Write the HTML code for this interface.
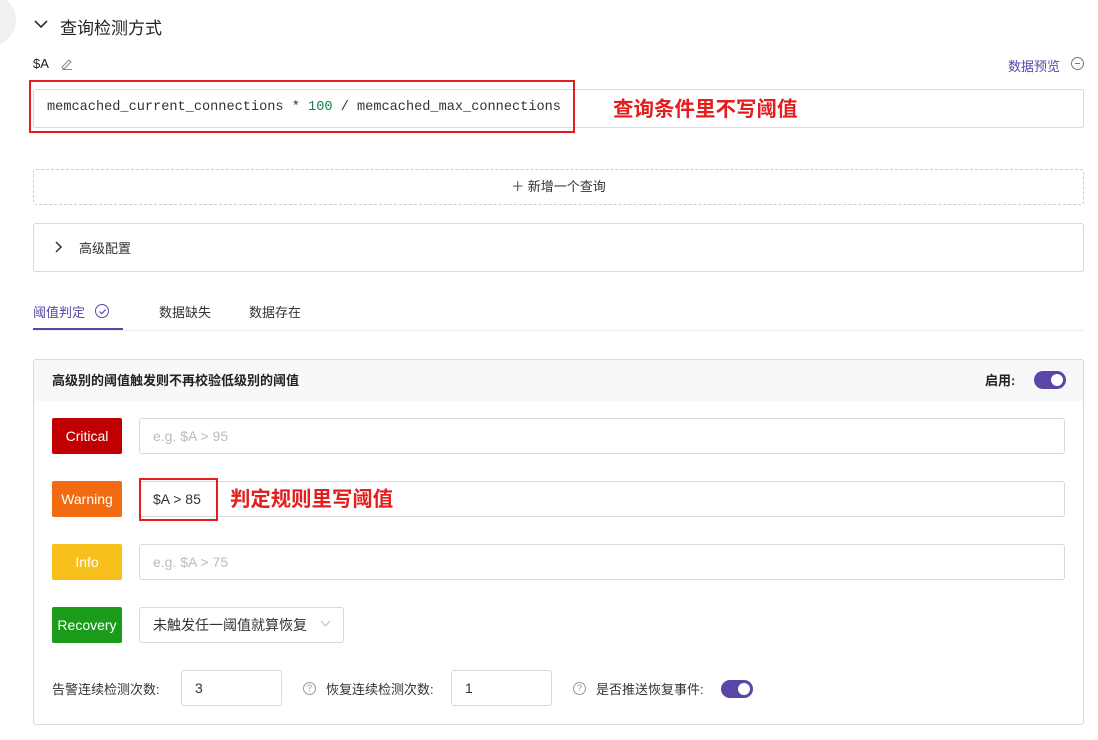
<!DOCTYPE html>
<html><head><meta charset="utf-8"><style>
*{box-sizing:border-box;margin:0;padding:0}
body{width:1098px;height:740px;background:#fff;font-family:"Liberation Sans","Noto Sans CJK SC",sans-serif;color:#333;position:relative;overflow:hidden;font-size:13px}
.a{position:absolute}
.box{position:absolute;border:1px solid #d9d9d9;border-radius:3px;background:#fff}
.lab{position:absolute;left:52px;width:70px;height:36px;color:#fff;font-size:14px;display:flex;align-items:center;justify-content:center;border-radius:2px}
.inp{position:absolute;left:139px;width:926px;height:36px;border:1px solid #d9d9d9;border-radius:3px;padding-left:13px;line-height:34px;font-size:14px;color:#bbb}
.sw{position:absolute;width:32px;height:18px;border-radius:9px;background:#5b46a8}
.sw:after{content:"";position:absolute;right:3px;top:3px;width:12px;height:12px;border-radius:50%;background:#fff}
.q{position:absolute;width:13px;height:13px;border:1px solid #999;border-radius:50%;font-size:9px;color:#999;text-align:center;line-height:11px}
</style></head><body>
<div class="a" style="left:-30px;top:-5px;width:46px;height:50px;border-radius:50%;background:#f0f0f0"></div>
<svg class="a" style="left:33px;top:17px" width="16" height="14"><path d="M2 4 L8 10 L14 4" stroke="#333" stroke-width="1.6" fill="none"/></svg>
<div class="a" style="left:60px;top:14px;font-size:17px;color:#222">查询检测方式</div>
<div class="a" style="left:33px;top:56px;font-size:13px;color:#222">$A</div>
<svg class="a" style="left:60px;top:57px" width="13" height="13"><path d="M2 10 L9 3 L11 5 L4 12 Z M2 12.5 H12" stroke="#888" stroke-width="1" fill="none"/></svg>
<div class="a" style="left:1008px;top:56px;color:#5b46a8">数据预览</div>
<div class="a" style="left:1071px;top:57px;width:13px;height:13px;border:1px solid #777;border-radius:50%"><div style="position:absolute;left:3px;top:5px;width:5px;height:1px;background:#777"></div></div>
<div class="box" style="left:33px;top:89px;width:1051px;height:39px"></div>
<div class="a" style="left:47px;top:100px;font-family:'Liberation Mono',monospace;font-size:13.6px;color:#333">memcached_current_connections * <span style="color:#1a7f4b">100</span> / memcached_max_connections</div>
<div class="a" style="left:29px;top:80px;width:546px;height:53px;border:2px solid #e41e1e"></div>
<div class="a" style="left:613px;top:92px;font-size:20.5px;font-weight:bold;color:#e41e1e">查询条件里不写阈值</div>
<div class="a" style="left:33px;top:169px;width:1051px;height:36px;border:1px dashed #ccc;border-radius:3px;text-align:center;line-height:34px;color:#333">＋ 新增一个查询</div>
<div class="box" style="left:33px;top:223px;width:1051px;height:49px"></div>
<svg class="a" style="left:53px;top:240px" width="10" height="14"><path d="M3 2 L8 7 L3 12" stroke="#333" stroke-width="1.5" fill="none"/></svg>
<div class="a" style="left:79px;top:238px;font-size:13px">高级配置</div>
<div class="a" style="left:33px;top:302px;color:#5b46a8">阈值判定</div>
<div class="a" style="left:95px;top:304px;width:14px;height:14px;border:1px solid #5b46a8;border-radius:50%"></div>
<svg class="a" style="left:98px;top:307px" width="9" height="9"><path d="M1.5 4.5 L3.8 6.8 L7.5 2.5" stroke="#5b46a8" stroke-width="1.2" fill="none"/></svg>
<div class="a" style="left:159px;top:302px">数据缺失</div>
<div class="a" style="left:249px;top:302px">数据存在</div>
<div class="a" style="left:33px;top:330px;width:1051px;height:1px;background:#eee"></div>
<div class="a" style="left:33px;top:328px;width:90px;height:2px;background:#5b46a8"></div>
<div class="box" style="left:33px;top:359px;width:1051px;height:366px"></div>
<div class="a" style="left:34px;top:360px;width:1049px;height:41px;background:#f7f8fa"></div>
<div class="a" style="left:52px;top:370px;font-weight:bold;color:#222">高级别的阈值触发则不再校验低级别的阈值</div>
<div class="a" style="left:985px;top:370px;font-weight:bold;color:#222">启用:</div>
<div class="sw" style="left:1034px;top:371px"></div>
<div class="lab" style="top:418px;background:#c00000">Critical</div>
<div class="inp" style="top:418px">e.g. $A &gt; 95</div>
<div class="lab" style="top:481px;background:#f26b12">Warning</div>
<div class="inp" style="top:481px;color:#333">$A &gt; 85</div>
<div class="a" style="left:139px;top:478px;width:79px;height:43px;border:2px solid #e41e1e"></div>
<div class="a" style="left:230px;top:482px;font-size:20.4px;font-weight:bold;color:#e41e1e">判定规则里写阈值</div>
<div class="lab" style="top:544px;background:#f7c01a">Info</div>
<div class="inp" style="top:544px">e.g. $A &gt; 75</div>
<div class="lab" style="top:607px;background:#1a9c1a">Recovery</div>
<div class="inp" style="top:607px;width:205px;color:#333">未触发任一阈值就算恢复</div>
<svg class="a" style="left:320px;top:620px" width="11" height="8"><path d="M1 1 L5.5 6 L10 1" stroke="#bbb" stroke-width="1" fill="none"/></svg>
<div class="a" style="left:52px;top:679px;color:#333">告警连续检测次数:</div>
<div class="inp" style="left:181px;top:670px;width:101px;color:#333">3</div>
<div class="q" style="left:303px;top:682px">?</div>
<div class="a" style="left:326px;top:679px">恢复连续检测次数:</div>
<div class="inp" style="left:451px;top:670px;width:101px;color:#333">1</div>
<div class="q" style="left:573px;top:682px">?</div>
<div class="a" style="left:596px;top:679px">是否推送恢复事件:</div>
<div class="sw" style="left:721px;top:680px"></div>
</body></html>
